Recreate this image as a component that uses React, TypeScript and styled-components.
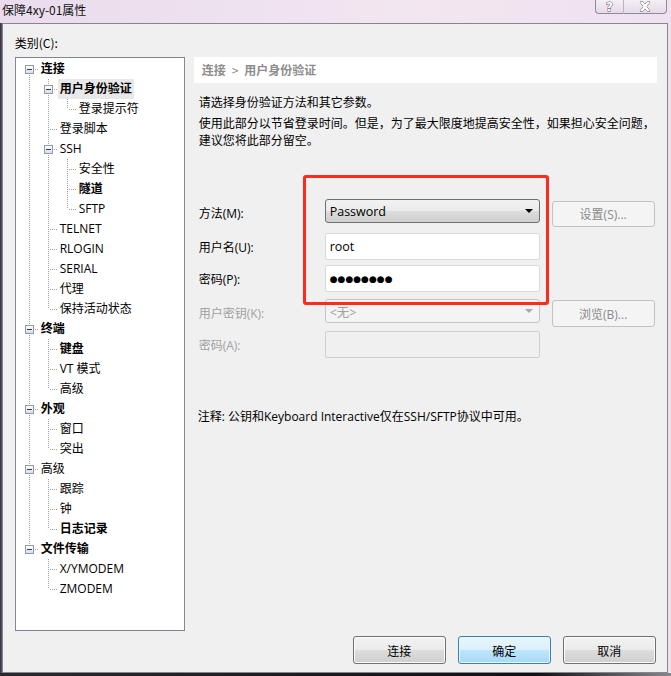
import React from "react";
import styled, { createGlobalStyle, css } from "styled-components";

const Global = createGlobalStyle`
  html, body { margin: 0; padding: 0; background: #eee1ee; }
  body { font-family: "Open Sans", "Noto Sans CJK SC", sans-serif; font-size: 12px; color: #000; }
  * { box-sizing: border-box; }
`;

const FONT = `"Open Sans", "Noto Sans CJK SC", sans-serif`;

const Window = styled.div`
  width: 671px;
  height: 676px;
  display: flex;
  flex-direction: column;
  background: linear-gradient(to right, #eadcec, #f2e6f1 60%, #efe2ef);
  overflow: hidden;
`;

const TitleBar = styled.div`
  height: 23px;
  display: flex;
  align-items: flex-start;
  justify-content: space-between;
  padding: 0 4px 0 2px;
  flex: none;
`;

const Title = styled.div`
  font-size: 12px;
  line-height: 20px;
  font-family: "Noto Sans CJK SC", sans-serif;
  color: #111;
`;

const CaptionButtons = styled.div`
  display: flex;
  margin-top: -1px;
`;

const CaptionButton = styled.div<{ $w: number; $first?: boolean }>`
  width: ${(p) => p.$w}px;
  height: 15px;
  border: 1px solid #8f8a98;
  ${(p) => (p.$first ? css`border-radius: 0 0 0 4px; border-right-color: #b9b2bf;` : css`border-left: none; border-radius: 0 0 4px 0;`)}
  background: linear-gradient(#f4eef5, #e6dbe8);
  display: flex;
  align-items: center;
  justify-content: center;
  font-family: "DejaVu Sans", sans-serif;
  font-weight: bold;
  font-size: 12px;
  line-height: 12px;
  color: #fff;
  -webkit-text-stroke: 1px #5d5a66;
  paint-order: stroke fill;
`;

const BodyRow = styled.div`
  flex: 1;
  display: flex;
  min-height: 0;
`;

const LeftEdge = styled.div`
  width: 2px;
  background: linear-gradient(to right, #2c2f3c, #5a5a6c);
`;

const RightEdge = styled.div`
  width: 4px;
  background: #eee1ee;
`;

const BottomEdge = styled.div`
  height: 3px;
  flex: none;
  background: linear-gradient(to right, #2a2a2a, #111 80%, #888);
`;

const Client = styled.div`
  flex: 1;
  border: 1px solid #8a8490;
  background: #f0f0f0;
  display: grid;
  grid-template-columns: 170px 463px;
  grid-template-rows: 20px 574px 28px;
  column-gap: 9px;
  row-gap: 4px;
  padding: 9px 10px 8px 12px;
  align-content: start;
`;

const CategoryLabel = styled.div`
  grid-column: 1 / 3;
  line-height: 20px;
  font-family: "Noto Sans CJK SC", sans-serif;
`;

const TreeBox = styled.div`
  background: #fff;
  border: 1px solid #828790;
  padding: 1px 0 0 4px;
  font-family: ${FONT};
`;

const Row = styled.div`
  height: 20px;
  display: flex;
  align-items: stretch;
`;

const Cell = styled.div`
  position: relative;
  width: 19px;
  flex: none;
`;

const VLine = styled.div<{ $top: number; $bottom: number }>`
  position: absolute;
  left: 9px;
  width: 1px;
  top: ${(p) => p.$top}px;
  bottom: ${(p) => p.$bottom}px;
  background: repeating-linear-gradient(to bottom, #a0a0a0 0 1px, transparent 1px 2px);
`;

const HLine = styled.div`
  position: absolute;
  top: 10px;
  left: 11px;
  right: 0;
  height: 1px;
  background: repeating-linear-gradient(to right, #a0a0a0 0 1px, transparent 1px 2px);
`;

const Expander = styled.div`
  position: absolute;
  left: 5px;
  top: 6px;
  width: 9px;
  height: 9px;
  border: 1px solid #919aa6;
  background: linear-gradient(#ffffff, #dadde2);
  &::after {
    content: "";
    position: absolute;
    left: 1px;
    top: 3px;
    width: 5px;
    height: 1px;
    background: #2b3f74;
  }
`;

const NodeLabel = styled.div<{ $bold?: boolean; $selected?: boolean }>`
  padding: 0 2px;
  line-height: 20px;
  white-space: nowrap;
  font-weight: ${(p) => (p.$bold ? 700 : 400)};
  background: ${(p) => (p.$selected ? "#e8e8e8" : "transparent")};
  color: #000;
`;

const Panel = styled.div`
  position: relative;
  display: flex;
  flex-direction: column;
  font-family: ${FONT};
`;

const Header = styled.div`
  height: 26px;
  background: #fff;
  padding-left: 8px;
  line-height: 26px;
  color: #8d8d8d;
  font-weight: 700;
  font-family: "Noto Sans CJK SC", sans-serif;
`;

const Crumb = styled.span`
  font-weight: 400;
  padding: 0 6px;
`;

const Desc = styled.p<{ $mt: number }>`
  margin: ${(p) => p.$mt}px 0 0 5px;
  line-height: 17px;
  font-family: "Noto Sans CJK SC", sans-serif;
`;

const Form = styled.div`
  display: flex;
  flex-direction: column;
  margin-top: 51px;
  padding-left: 5px;
`;

const FormRow = styled.div<{ $h: number; $mt: number }>`
  display: grid;
  grid-template-columns: 114px 215px 103px;
  column-gap: 12px;
  height: ${(p) => p.$h}px;
  margin-top: ${(p) => p.$mt}px;
`;

const FieldLabel = styled.div<{ $disabled?: boolean }>`
  align-self: center;
  color: ${(p) => (p.$disabled ? "#a0a0a0" : "#000")};
`;

const Combo = styled.div<{ $disabled?: boolean }>`
  height: 24px;
  border: 1px solid ${(p) => (p.$disabled ? "#c5c5c5" : "#707070")};
  border-radius: 3px;
  display: flex;
  align-items: center;
  justify-content: space-between;
  padding: 0 6px 0 4px;
  font-size: 12.5px;
  color: ${(p) => (p.$disabled ? "#a0a0a0" : "#000")};
  background: ${(p) =>
    p.$disabled ? "#f4f4f4" : "linear-gradient(#f2f2f2 0%, #ebebeb 50%, #dddddd 50%, #cfcfcf 100%)"};
`;

const Arrow = styled.span<{ $disabled?: boolean }>`
  width: 0;
  height: 0;
  border-left: 4px solid transparent;
  border-right: 4px solid transparent;
  border-top: 4px solid ${(p) => (p.$disabled ? "#a8a8a8" : "#000")};
`;

const TextBox = styled.div<{ $disabled?: boolean }>`
  height: 27px;
  border: 1px solid ${(p) => (p.$disabled ? "#cfcfcf" : "#dadada")};
  border-radius: 2px;
  background: ${(p) => (p.$disabled ? "#f0f0f0" : "#fff")};
  display: flex;
  align-items: center;
  padding-left: 4px;
  font-size: 12.5px;
`;

const Dots = styled.span`
  font-family: "DejaVu Sans", sans-serif;
  font-size: 9px;
  letter-spacing: 0;
`;

const SideButton = styled.div<{ $mt: number; $h: number }>`
  margin-top: ${(p) => p.$mt}px;
  height: ${(p) => p.$h}px;
  border: 1px solid #c2c2c2;
  border-radius: 3px;
  background: #f4f4f4;
  color: #8a8a8a;
  display: flex;
  align-items: center;
  justify-content: center;
`;

const Note = styled.div`
  margin: 50px 0 0 4px;
  line-height: 17px;
`;

const RedBox = styled.div`
  position: absolute;
  left: 109px;
  top: 118px;
  width: 246px;
  height: 130px;
  border: 3px solid #ff2a1c;
  border-radius: 3px;
  pointer-events: none;
`;

const ButtonBar = styled.div`
  grid-column: 1 / 3;
  display: flex;
  justify-content: flex-end;
  gap: 12px;
  padding-right: 1px;
  margin-top: 1px;
  height: 28px;
`;

const DialogButton = styled.button<{ $default?: boolean }>`
  width: 93px;
  height: 28px;
  border: 1px solid ${(p) => (p.$default ? "#3c7fb1" : "#707070")};
  border-radius: 3px;
  font-family: "Noto Sans CJK SC", sans-serif;
  font-size: 12px;
  color: #000;
  padding: 0;
  background: ${(p) =>
    p.$default
      ? "linear-gradient(#eaf6fd 0%, #d9f0fc 50%, #bee6fd 50%, #a7d9f5 100%)"
      : "linear-gradient(#f2f2f2 0%, #ebebeb 50%, #dddddd 50%, #cfcfcf 100%)"};
  box-shadow: inset 0 0 0 1px ${(p) => (p.$default ? "#e8f6fe" : "#fbfbfb")};
`;

type Node = { label: string; bold?: boolean; selected?: boolean; children?: Node[] };

const tree: Node[] = [
  {
    label: "连接",
    bold: true,
    children: [
      { label: "用户身份验证", bold: true, selected: true, children: [{ label: "登录提示符" }] },
      { label: "登录脚本" },
      { label: "SSH", children: [{ label: "安全性" }, { label: "隧道", bold: true }, { label: "SFTP" }] },
      { label: "TELNET" },
      { label: "RLOGIN" },
      { label: "SERIAL" },
      { label: "代理" },
      { label: "保持活动状态" },
    ],
  },
  { label: "终端", bold: true, children: [{ label: "键盘", bold: true }, { label: "VT 模式" }, { label: "高级" }] },
  { label: "外观", bold: true, children: [{ label: "窗口" }, { label: "突出" }] },
  { label: "高级", children: [{ label: "跟踪" }, { label: "钟" }, { label: "日志记录", bold: true }] },
  { label: "文件传输", bold: true, children: [{ label: "X/YMODEM" }, { label: "ZMODEM" }] },
];

type Flat = { node: Node; lasts: boolean[]; first: boolean };

function flatten(nodes: Node[], lasts: boolean[], out: Flat[], root: boolean) {
  nodes.forEach((n, i) => {
    const l = [...lasts, i === nodes.length - 1];
    out.push({ node: n, lasts: l, first: root && i === 0 });
    if (n.children) flatten(n.children, l, out, false);
  });
  return out;
}

const rows = flatten(tree, [], [], true);

function TreeRow({ item }: { item: Flat }) {
  const depth = item.lasts.length - 1;
  const cells = [];
  for (let i = 0; i < depth; i++) {
    cells.push(<Cell key={i}>{!item.lasts[i] && <VLine $top={0} $bottom={0} />}</Cell>);
  }
  const last = item.lasts[depth];
  cells.push(
    <Cell key="own">
      <VLine $top={item.first ? 10 : 0} $bottom={last ? 10 : 0} />
      <HLine />
      {item.node.children && <Expander />}
    </Cell>
  );
  return (
    <Row>
      {cells}
      <NodeLabel $bold={item.node.bold} $selected={item.node.selected}>
        {item.node.label}
      </NodeLabel>
    </Row>
  );
}

export default function App() {
  return (
    <>
      <Global />
      <Window>
        <TitleBar>
          <Title>保障4xy-01属性</Title>
          <CaptionButtons>
            <CaptionButton $w={29} $first>?</CaptionButton>
            <CaptionButton $w={43}>
              <svg width="12" height="11" viewBox="0 0 12 11">
                <path
                  d="M1 1h3l2 2.5L8 1h3L7.5 5.5 11 10H8L6 7.5 4 10H1l3.5-4.5z"
                  fill="#fff"
                  stroke="#55525e"
                  strokeWidth="1"
                  strokeLinejoin="round"
                />
              </svg>
            </CaptionButton>
          </CaptionButtons>
        </TitleBar>
        <BodyRow>
          <LeftEdge />
          <Client>
            <CategoryLabel>类别(C):</CategoryLabel>
            <TreeBox>
              {rows.map((r, i) => (
                <TreeRow key={i} item={r} />
              ))}
            </TreeBox>
            <Panel>
              <Header>
                连接<Crumb>&gt;</Crumb>用户身份验证
              </Header>
              <Desc $mt={10}>请选择身份验证方法和其它参数。</Desc>
              <Desc $mt={4}>
                使用此部分以节省登录时间。但是，为了最大限度地提高安全性，如果担心安全问题，
                <br />
                建议您将此部分留空。
              </Desc>
              <Form>
                <FormRow $h={28} $mt={0}>
                  <FieldLabel>方法(M):</FieldLabel>
                  <Combo>
                    <span>Password</span>
                    <Arrow />
                  </Combo>
                  <SideButton $mt={2} $h={26}>设置(S)...</SideButton>
                </FormRow>
                <FormRow $h={27} $mt={6}>
                  <FieldLabel>用户名(U):</FieldLabel>
                  <TextBox>root</TextBox>
                </FormRow>
                <FormRow $h={27} $mt={5}>
                  <FieldLabel>密码(P):</FieldLabel>
                  <TextBox>
                    <Dots>●●●●●●●●</Dots>
                  </TextBox>
                </FormRow>
                <FormRow $h={28} $mt={7}>
                  <FieldLabel $disabled>用户密钥(K):</FieldLabel>
                  <Combo $disabled>
                    <span>&lt;无&gt;</span>
                    <Arrow $disabled />
                  </Combo>
                  <SideButton $mt={1} $h={27}>浏览(B)...</SideButton>
                </FormRow>
                <FormRow $h={27} $mt={4}>
                  <FieldLabel $disabled>密码(A):</FieldLabel>
                  <TextBox $disabled />
                </FormRow>
              </Form>
              <Note>注释: 公钥和Keyboard Interactive仅在SSH/SFTP协议中可用。</Note>
              <RedBox />
            </Panel>
            <ButtonBar>
              <DialogButton>连接</DialogButton>
              <DialogButton $default>确定</DialogButton>
              <DialogButton>取消</DialogButton>
            </ButtonBar>
          </Client>
          <RightEdge />
        </BodyRow>
        <BottomEdge />
      </Window>
    </>
  );
}
